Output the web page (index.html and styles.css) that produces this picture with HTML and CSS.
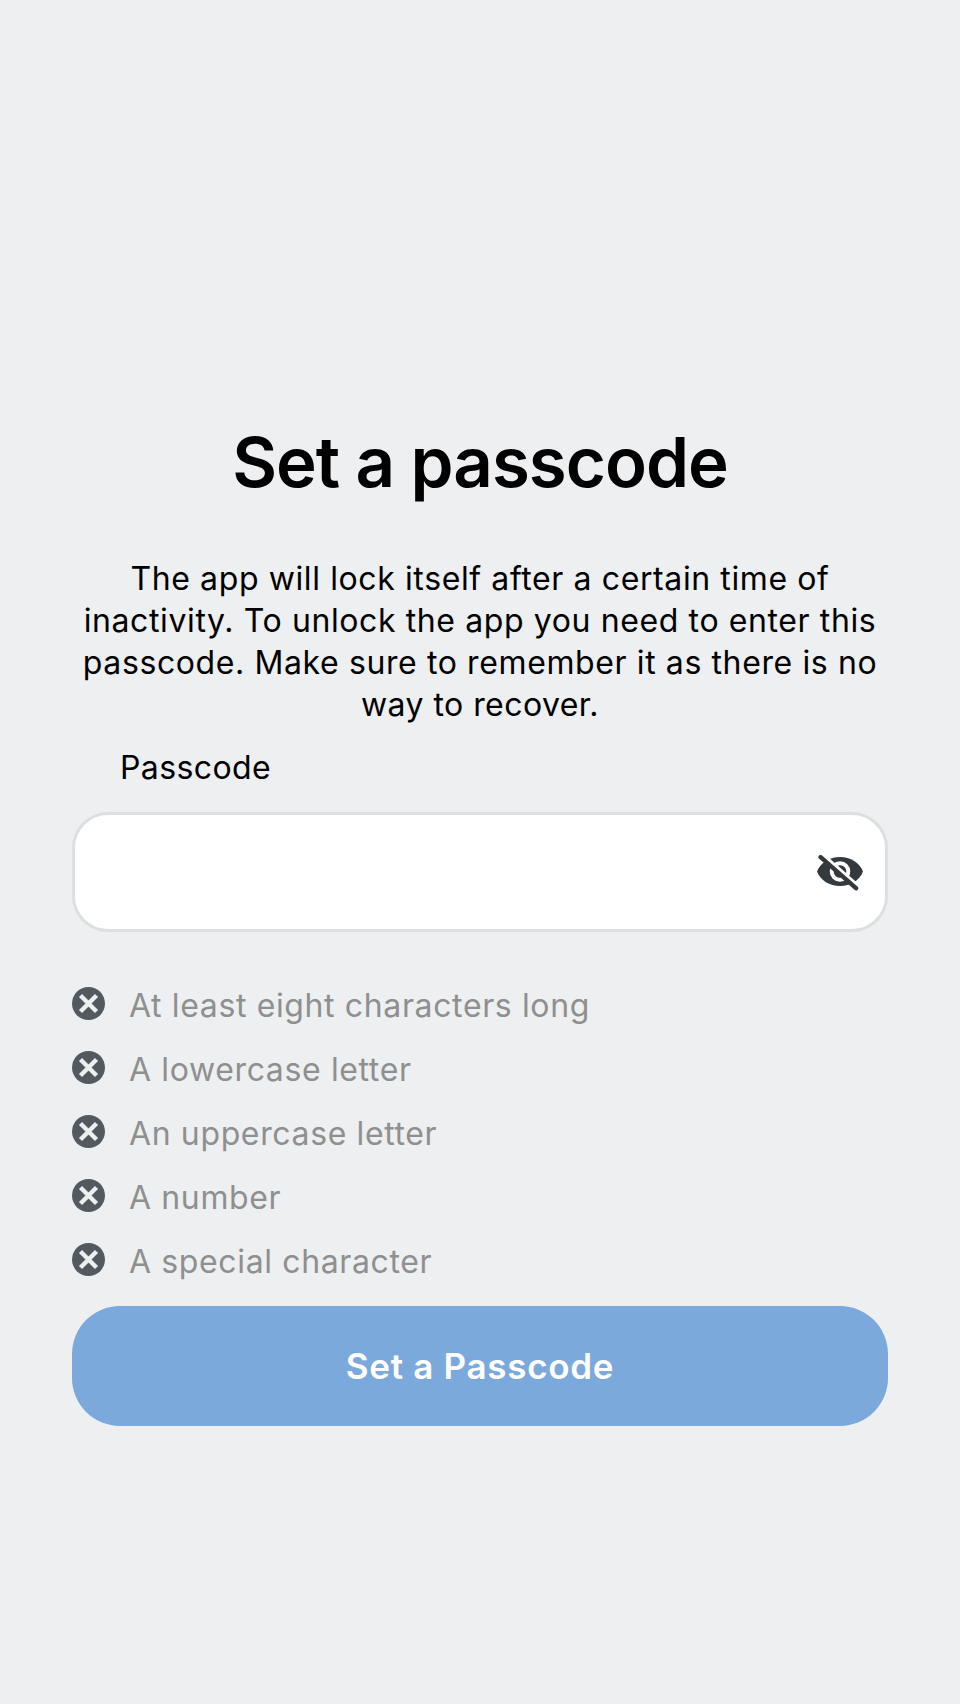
FILE: index.html
```html
<!DOCTYPE html>
<html lang="en">
<head>
<meta charset="utf-8">
<title>Set a passcode</title>
<link rel="stylesheet" href="styles.css">
</head>
<body>
<main class="screen">
  <h1 class="title">Set a passcode</h1>
  <p class="intro">The app will lock itself after a certain time of<br>inactivity. To unlock the app you need to enter this<br>passcode. Make sure to remember it as there is no<br><span class="last">way to recover.</span></p>
  <label class="label" for="passcode">Passcode</label>
  <div class="field">
    <input class="input" id="passcode" type="password">
    <svg class="eye" viewBox="0 0 46 36">
      <path class="lid" d="M0 16.500C3.500 7.500 12.500 2 23 2s19.500 5.500 23 14.500C42.500 25.500 33.500 31 23 31S3.500 25.500 0 16.500z"/>
      <circle class="ring" cx="23" cy="16.500" r="8.300"/>
      <path class="gap" d="M7.500 1.500L43 33"/>
      <path class="slash" d="M3.600 2.200L39 33.200"/>
    </svg>
  </div>
  <ul class="rules">
    <li class="rule"><svg class="mark" viewBox="0 0 33 33"><circle cx="16.500" cy="16.500" r="16.500"/><path d="M8.500 8.500l16 16M24.500 8.500l-16 16"/></svg><span>At least eight characters long</span></li>
    <li class="rule"><svg class="mark" viewBox="0 0 33 33"><circle cx="16.500" cy="16.500" r="16.500"/><path d="M8.500 8.500l16 16M24.500 8.500l-16 16"/></svg><span>A lowercase letter</span></li>
    <li class="rule"><svg class="mark" viewBox="0 0 33 33"><circle cx="16.500" cy="16.500" r="16.500"/><path d="M8.500 8.500l16 16M24.500 8.500l-16 16"/></svg><span>An uppercase letter</span></li>
    <li class="rule"><svg class="mark" viewBox="0 0 33 33"><circle cx="16.500" cy="16.500" r="16.500"/><path d="M8.500 8.500l16 16M24.500 8.500l-16 16"/></svg><span>A number</span></li>
    <li class="rule"><svg class="mark" viewBox="0 0 33 33"><circle cx="16.500" cy="16.500" r="16.500"/><path d="M8.500 8.500l16 16M24.500 8.500l-16 16"/></svg><span>A special character</span></li>
  </ul>
  <button class="submit">Set a Passcode</button>
</main>
</body>
</html>
```
FILE: styles.css
```css
* { box-sizing: border-box; }
body { margin: 0; background: #edeff1; color: #000; font-family: Inter, sans-serif; font-size: 32px; }
.screen { display: flex; flex-direction: column; height: 1704px; padding: 422px 72px 0; }
.title { margin: 0; height: 80px; line-height: 80px; font-size: 69px; font-weight: 600; letter-spacing: -1px; text-align: center; white-space: nowrap; }
.intro { margin: 56px 0 0; line-height: 42px; letter-spacing: .61px; text-align: center; white-space: nowrap; }
.last { letter-spacing: .45px; }
.label { margin: 21px 0 0 48px; height: 42px; line-height: 42px; letter-spacing: .4px; }
.field { display: flex; align-items: center; margin-top: 23px; height: 120px; padding-right: 22px; background: #fff; border: 3px solid #dce0e3; border-radius: 36px; }
.input { flex: 1; min-width: 0; height: 100%; border: 0; outline: 0; background: transparent; font: inherit; padding: 0 40px; }
.eye { width: 46px; height: 36px; margin-top: 2px; }
.lid { fill: #34393d; }
.ring { fill: none; stroke: #fff; stroke-width: 4; }
.gap { stroke: #fff; stroke-width: 4; }
.slash { stroke: #34393d; stroke-width: 4.4; stroke-linecap: round; }
.rules { list-style: none; margin: 41px 0 0; padding: 0; }
.rule { display: flex; align-items: center; gap: 24px; height: 64px; color: #8f8f8f; letter-spacing: .63px; white-space: nowrap; }
.mark { width: 33px; height: 33px; margin-bottom: 3px; fill: #545960; }
.mark path { fill: none; stroke: #edeff1; stroke-width: 4.4; }
.submit { margin: 13px 0 0; height: 120px; flex: none; border: 0; border-radius: 48px; background: #7ba9db; color: #fff; font: 600 35px Inter, sans-serif; letter-spacing: .7px; }
```
